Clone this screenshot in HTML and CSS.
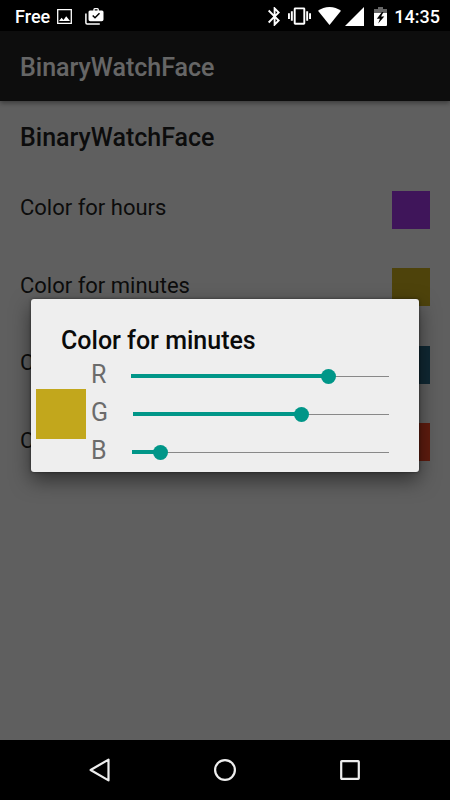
FILE: index.html
```html
<!DOCTYPE html>
<html lang="en">
<head>
<meta charset="utf-8">
<meta name="viewport" content="width=device-width, initial-scale=1">
<title>BinaryWatchFace</title>
<link rel="stylesheet" href="styles.css">
</head>
<body>
<div class="status-bar">
  <div class="status-left">
    <span>Free</span>
    <svg class="icon-photo" width="15" height="15" viewBox="0 0 15 15" aria-hidden="true"><path fill="none" stroke="#fff" stroke-width="1.3" d="M.7.7h13.6v13.6H.7z"/><path fill="#fff" d="M2 12l2.600-3.300 1.900 2.200L9.200 7.300 13 12z"/></svg>
    <svg width="19" height="17" viewBox="0 0 19 17" aria-hidden="true"><path fill="none" stroke="#fff" stroke-width="1.500" d="M.9 5.500v9.300q0 1.200 1.200 1.200h12.700"/><path fill="#fff" fill-rule="evenodd" d="M5 2.500h3.300V1.500Q8.300 0 9.800 0h2.600q1.500 0 1.500 1.500v1H17q1.500 0 1.500 1.500v7.500q0 1.800-1.800 1.800H5.300q-1.800 0-1.800-1.800V4q0-1.500 1.500-1.500zm4.700 0h2.800V1.200H9.700z"/><path fill="none" stroke="#000" stroke-width="1.500" d="M7.700 7.500l2.300 2.300 4.500-4.600"/></svg>
  </div>
  <div class="status-right">
    <svg width="12" height="19" viewBox="5 2 12.710 20" preserveAspectRatio="none" aria-hidden="true"><path fill="#fff" d="M17.710 7.710L12 2h-1v7.590L6.410 5 5 6.410 10.590 12 5 17.590 6.410 19 11 14.410V22h1l5.710-5.710-4.300-4.290 4.300-4.290zM13 5.830l1.880 1.880L13 9.590V5.830zm1.880 10.460L13 18.170v-3.760l1.880 1.880z"/></svg>
    <svg class="icon-vibrate" width="23" height="18" viewBox="0 3 24 18" aria-hidden="true"><path fill="#fff" d="M0 15h2V9H0v6zm3 2h2V7H3v10zm19-8v6h2V9h-2zm-3 8h2V7h-2v10zM16.500 3h-9C6.670 3 6 3.670 6 4.500v15c0 .83.67 1.500 1.500 1.500h9c.83 0 1.500-.67 1.500-1.500v-15c0-.83-.67-1.500-1.500-1.500zM16 19H8V5h8v14z"/></svg>
    <svg class="icon-wifi" width="23" height="18" viewBox="0 0 23 18" aria-hidden="true"><path fill="#fff" d="M0 3.800Q5 0 11.500 0T23 3.800L11.500 18z"/></svg>
    <svg class="icon-signal" width="19" height="19" viewBox="0 0 19 19" aria-hidden="true"><path fill="#fff" d="M19 0v19H0z"/></svg>
    <svg class="icon-battery" width="13" height="19" viewBox="0 0 13 19" aria-hidden="true"><path fill="#666" d="M4 0h5v2h4v4H0V2h4z"/><path fill="#fff" d="M0 6h13v12q0 1-1 1H1q-1 0-1-1z"/><path fill="#000" d="M8 5l-5.200 6.800h3.100L4.200 16.500 10.300 9.600H7.100L9.500 5z"/></svg>
    <time>14:35</time>
  </div>
</div>

<main class="app">
  <header class="toolbar"><h1>BinaryWatchFace</h1></header>
  <h2 class="category">BinaryWatchFace</h2>
  <ul class="preferences">
    <li><span>Color for hours</span><span class="swatch purple"></span></li>
    <li><span>Color for minutes</span><span class="swatch gold"></span></li>
    <li><span>Color</span><span class="swatch blue"></span></li>
    <li><span>Color</span><span class="swatch red"></span></li>
  </ul>
  <div class="backdrop">
    <section class="dialog" role="dialog" aria-labelledby="dialog-title">
      <h2 id="dialog-title">Color for minutes</h2>
      <div class="picker">
        <span class="preview"></span>
        <div class="channels">
          <div class="channel"><label for="red">R</label><div class="slider" style="--value:195"><input id="red" type="range" min="0" max="255" value="195"></div></div>
          <div class="channel"><label for="green">G</label><div class="slider" style="--value:168"><input id="green" type="range" min="0" max="255" value="168"></div></div>
          <div class="channel"><label for="blue">B</label><div class="slider" style="--value:28"><input id="blue" type="range" min="0" max="255" value="28"></div></div>
        </div>
      </div>
    </section>
  </div>
</main>

<nav class="nav-bar">
  <button type="button" aria-label="Back"><svg width="24" height="26" viewBox="0 0 24 26"><path fill="none" stroke="#eee" stroke-width="2.200" stroke-linejoin="round" d="M20.500 2.600v20.800L2.600 13z"/></svg></button>
  <button type="button" aria-label="Home"><svg width="24" height="24" viewBox="0 0 24 24"><circle cx="12" cy="12" r="9.900" fill="none" stroke="#eee" stroke-width="2.200"/></svg></button>
  <button type="button" aria-label="Recent apps"><svg width="20" height="20" viewBox="0 0 20 20"><rect x="1.200" y="1.200" width="17.600" height="17.600" rx=".6" fill="none" stroke="#eee" stroke-width="2.200"/></svg></button>
</nav>
</body>
</html>
```
FILE: styles.css
```css
* {
  box-sizing: border-box;
}

body {
  display: flex;
  flex-direction: column;
  min-height: 100vh;
  margin: 0;
  background: #000;
  font-family: Roboto, "Noto Sans", sans-serif;
}

h1,
h2 {
  margin: 0;
  font-size: 25px;
  font-weight: 500;
}

svg {
  display: block;
}

.status-bar,
.status-left,
.status-right {
  display: flex;
  align-items: center;
}

.status-bar {
  justify-content: space-between;
  height: 31px;
  padding: 2px 10px 0 15px;
  color: #fff;
  font-size: 18px;
  font-weight: 500;
}

.status-right {
  padding-bottom: 1px;
}

.icon-photo {
  margin: 0 13px 0 7px;
}

.icon-vibrate {
  margin: 0 7px 0 8px;
}

.icon-signal {
  margin: 0 10px 0 4px;
}

.icon-battery {
  margin-right: 7px;
}

.app {
  position: relative;
  display: flex;
  flex: 1;
  flex-direction: column;
  background: #eee;
  color: #1f1f1f;
}

.toolbar {
  display: flex;
  align-items: center;
  height: 70px;
  padding: 2px 20px 0;
  background: #212121;
  box-shadow: 0 2px 5px rgba(0, 0, 0, 0.4);
  color: #fff;
}

.category {
  height: 70px;
  padding: 0 20px;
  line-height: 73px;
}

.preferences {
  display: flex;
  flex-direction: column;
  height: 310px;
  margin: 0;
  padding: 0;
  list-style: none;
  font-size: 22px;
}

.preferences li {
  display: flex;
  flex: 1;
  align-items: center;
  justify-content: space-between;
  padding: 0 20px;
}

.preferences li span:first-child {
  padding-bottom: 4px;
}

.swatch {
  width: 38px;
  height: 38px;
}

.purple {
  background: #9f35e0;
}

.gold {
  background: #c2a71c;
}

.blue {
  background: #2a6480;
}

.red {
  background: #ed4627;
}

.backdrop {
  position: absolute;
  inset: 0;
  display: flex;
  align-items: center;
  padding: 0 31px;
  background: rgba(0, 0, 0, 0.6);
}

.dialog {
  flex: 1;
  padding: 26px 30px 1px 5px;
  border-radius: 3px;
  background: #eee;
  box-shadow: 0 8px 20px rgba(0, 0, 0, 0.5), 0 0 3px rgba(0, 0, 0, 0.5);
}

.dialog h2 {
  padding-left: 25px;
  color: #0a0a0a;
  line-height: 32px;
}

.picker {
  display: flex;
  align-items: center;
  gap: 5px;
}

.preview {
  width: 50px;
  height: 50px;
  background: #c2a71c;
}

.channels {
  flex: 1;
}

.channel {
  display: flex;
  gap: 25px;
  height: 38px;
}

.channel label {
  color: #6b6b6b;
  font-size: 25px;
  line-height: 36px;
}

.slider {
  --fill: calc(var(--value) / 255 * 100%);
  display: flex;
  flex: 1;
  align-items: center;
  background:
    linear-gradient(#009688, #009688) left center / var(--fill) 4px no-repeat,
    linear-gradient(#888, #888) left center / 100% 1px no-repeat;
}

.slider input {
  flex: 1;
  min-width: 0;
  height: 15px;
  margin: 0 -7px;
  appearance: none;
  background: transparent;
}

.slider input::-webkit-slider-thumb {
  width: 15px;
  height: 15px;
  border: 0;
  border-radius: 50%;
  appearance: none;
  background: #009688;
}

.nav-bar {
  display: flex;
  height: 60px;
  padding: 0 37px;
}

.nav-bar button {
  display: flex;
  flex: 1;
  align-items: center;
  justify-content: center;
  padding: 0;
  border: 0;
  background: none;
}
```
